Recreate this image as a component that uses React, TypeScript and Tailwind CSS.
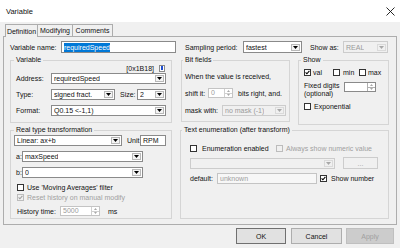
import React from "react";

const FONT = "font-['Liberation_Sans',Arial,sans-serif]";

function Tri({ up, disabled, w = 5, h = 3 }: { up?: boolean; disabled?: boolean; w?: number; h?: number }) {
  return (
    <svg width={w} height={h} viewBox={`0 0 ${w} ${h}`}>
      <path d={up ? `M0 ${h}H${w}L${w / 2} 0Z` : `M0 0H${w}L${w / 2} ${h}Z`} fill={disabled ? "#a8a8a8" : "#000"} />
    </svg>
  );
}

function Combo({ className = "", value = "", disabled = false }: { className?: string; value?: string; disabled?: boolean }) {
  return (
    <div
      className={`h-[11px] flex items-center justify-between border pl-[2px] pr-[1px] shrink-0 ${
        disabled ? "border-[#cccccc] bg-[#f0f0f0] text-[#9a9a9a]" : "border-[#8a8a8a] bg-white text-[#111]"
      } ${className}`}
    >
      <span className="truncate leading-[9px]">{value}</span>
      <div
        className={`w-[9px] h-[7px] flex items-center justify-center border shrink-0 ${
          disabled ? "border-[#dadada] bg-[#f0f0f0]" : "border-[#b8b8b8] bg-[#f4f4f4]"
        }`}
      >
        <Tri disabled={disabled} />
      </div>
    </div>
  );
}

function Spin({ className = "", value = "", disabled = false }: { className?: string; value?: string; disabled?: boolean }) {
  return (
    <div
      className={`h-[10px] flex border shrink-0 ${
        disabled ? "border-[#c4c4c4] bg-white text-[#9a9a9a]" : "border-[#8a8a8a] bg-white text-black"
      } ${className}`}
    >
      <div className="flex-1 pl-[2px] leading-[8px]">{value}</div>
      <div className={`w-[8px] flex flex-col border-l ${disabled ? "border-[#d0d0d0]" : "border-[#b0b0b0]"}`}>
        <div className={`flex-1 flex items-center justify-center border-b ${disabled ? "border-[#d0d0d0]" : "border-[#b0b0b0]"}`}>
          <Tri up disabled w={3} h={2} />
        </div>
        <div className="flex-1 flex items-center justify-center">
          <Tri disabled w={3} h={2} />
        </div>
      </div>
    </div>
  );
}

function Check({ checked = false, disabled = false }: { checked?: boolean; disabled?: boolean }) {
  return (
    <div
      className={`w-[7px] h-[7px] shrink-0 border flex items-center justify-center ${
        disabled ? "border-[#bcbcbc] bg-[#f0f0f0]" : "border-[#333333] bg-white"
      }`}
    >
      {checked && (
        <svg width="5" height="5" viewBox="0 0 5 5">
          <path d="M0.6 2.4L1.9 3.8L4.4 0.9" fill="none" stroke={disabled ? "#a0a0a0" : "#000"} strokeWidth="1.1" />
        </svg>
      )}
    </div>
  );
}

function Group({ title, className = "", legendClass = "ml-[3px]", children }: { title: string; className?: string; legendClass?: string; children: React.ReactNode }) {
  return (
    <fieldset className={`border border-[#d5d5d5] shrink-0 ${className}`}>
      <legend className={`px-[2px] leading-[8px] whitespace-nowrap ${legendClass}`}>{title}</legend>
      {children}
    </fieldset>
  );
}

export default function App() {
  return (
    <div className={`w-[400px] h-[248px] bg-[#f0f0f0] ${FONT} text-[7px] leading-[9px] text-[#111] flex flex-col overflow-hidden`}>
      {/* Title bar */}
      <div className="h-[22px] bg-white flex items-center justify-between pl-[6px] pr-[5px] shrink-0">
        <span className="text-[7.5px]">Variable</span>
        <svg width="9" height="9" viewBox="0 0 9 9">
          <path d="M0.5 0.5L8.5 8.5M8.5 0.5L0.5 8.5" stroke="#111" strokeWidth="0.9" />
        </svg>
      </div>

      {/* Tabs */}
      <div className="h-[14px] flex items-end pl-[5px] shrink-0">
        <div className="relative z-10 h-[13px] w-[33px] mb-[-1px] border border-b-0 border-[#adadad] bg-[#f0f0f0] flex items-center justify-center">
          Definition
        </div>
        <div className="h-[12px] w-[35px] border-t border-r border-[#adadad] flex items-center justify-center">Modifying</div>
        <div className="h-[12px] w-[40px] border-t border-r border-[#adadad] flex items-center justify-center">Comments</div>
      </div>

      {/* Panel */}
      <div className="mx-[3px] h-[189px] border border-[#adadad] shrink-0 flex flex-col">
        {/* Variable name row */}
        <div className="mt-[4px] h-[12px] flex items-center pl-[6px] whitespace-nowrap">
          <span className="w-[51px] shrink-0">Variable name:</span>
          <div className="w-[115px] h-[12px] shrink-0 border border-[#8a8a8a] bg-white flex items-center pl-[2px]">
            <span className="bg-[#0078d7] text-white leading-[9px]">requiredSpeed</span>
          </div>
          <span className="ml-[9px] w-[58px] shrink-0">Sampling period:</span>
          <Combo className="w-[59px] h-[12px]" value="fastest" />
          <span className="ml-[8px] w-[33px] shrink-0">Show as:</span>
          <Combo className="w-[45px] h-[12px]" value="REAL" disabled />
        </div>

        {/* Top groups */}
        <div className="mt-[3px] flex items-start pl-[6px]">
          <Group title="Variable" className="w-[162px] h-[67px]">
            <div className="flex flex-col pl-[5px] pr-[5px]">
              <div className="h-[8px] flex items-center justify-end pr-[1px]">
                <span>[0x1B18]</span>
                <div className="ml-[5px] w-[6px] h-[7px] border border-[#8a8a8a] bg-white flex items-center justify-center">
                  <div className="w-[2px] h-[4px] bg-[#1f4fd0]" />
                </div>
              </div>
              <div className="mt-[1px] h-[11px] flex items-center">
                <span className="w-[35px] shrink-0">Address:</span>
                <Combo className="w-[115px]" value="requiredSpeed" />
              </div>
              <div className="mt-[5px] h-[11px] flex items-center">
                <span className="w-[35px] shrink-0">Type:</span>
                <Combo className="w-[64px]" value="signed fract." />
                <span className="ml-[5px] w-[17px] shrink-0">Size:</span>
                <Combo className="w-[29px]" value="2" />
              </div>
              <div className="mt-[5px] h-[11px] flex items-center">
                <span className="w-[35px] shrink-0">Format:</span>
                <Combo className="w-[115px]" value="Q0.15 <-1,1)" />
              </div>
            </div>
          </Group>

          <Group title="Bit fields" className="ml-[9px] w-[109px] h-[66px]" legendClass="ml-[1px]">
            <div className="flex flex-col pl-[3px]">
              <div className="mt-[8px] h-[9px] whitespace-nowrap">When the value is received,</div>
              <div className="mt-[7px] h-[10px] flex items-center whitespace-nowrap">
                <span className="w-[23px] shrink-0">shift it:</span>
                <Spin className="w-[25px]" value="0" disabled />
                <span className="ml-[5px]">bits right, and.</span>
              </div>
              <div className="mt-[7px] h-[11px] flex items-center">
                <span className="w-[37px] shrink-0 whitespace-nowrap">mask with:</span>
                <Combo className="w-[64px]" value="no mask (-1)" disabled />
              </div>
            </div>
          </Group>

          <Group title="Show" className="ml-[8px] w-[91px] h-[69px]" legendClass="ml-[2px]">
            <div className="flex flex-col pl-[5px]">
              <div className="mt-[4px] h-[8px] flex items-center">
                <div className="w-[29px] flex items-center">
                  <Check checked />
                  <span className="ml-[2px]">val</span>
                </div>
                <div className="w-[26px] flex items-center">
                  <Check />
                  <span className="ml-[3px]">min</span>
                </div>
                <div className="flex items-center">
                  <Check />
                  <span className="ml-[2px]">max</span>
                </div>
              </div>
              <div className="mt-[6px] flex items-start">
                <div className="w-[40px] leading-[8px] shrink-0">
                  Fixed digits
                  <br />
                  (optional)
                </div>
                <Spin className="w-[32px]" />
              </div>
              <div className="mt-[4px] h-[8px] flex items-center">
                <Check />
                <span className="ml-[3px]">Exponential</span>
              </div>
            </div>
          </Group>
        </div>

        {/* Bottom groups */}
        <div className="mt-[1px] flex items-start pl-[6px]">
          <Group title="Real type transformation" className="w-[162px] h-[93px]">
            <div className="flex flex-col whitespace-nowrap">
              <div className="mt-[1px] h-[11px] flex items-center pl-[3px]">
                <Combo className="w-[108px]" value="Linear: ax+b" />
                <span className="ml-[5px] w-[13px] shrink-0">Unit</span>
                <div className="w-[26px] h-[11px] shrink-0 border border-[#8a8a8a] bg-white pl-[2px] flex items-center">RPM</div>
              </div>
              <div className="mt-[5px] h-[11px] flex items-center">
                <span className="w-[11px] shrink-0 pl-[5px]">a:</span>
                <Combo className="w-[121px]" value="maxSpeed" />
              </div>
              <div className="mt-[5px] h-[11px] flex items-center">
                <span className="w-[11px] shrink-0 pl-[5px]">b:</span>
                <Combo className="w-[121px]" value="0" />
              </div>
              <div className="mt-[5px] h-[8px] flex items-center pl-[6px]">
                <Check />
                <span className="ml-[3px]">Use 'Moving Averages' filter</span>
              </div>
              <div className="mt-[2px] h-[8px] flex items-center pl-[6px] text-[#a0a0a0]">
                <Check checked disabled />
                <span className="ml-[3px]">Reset history on manual modify</span>
              </div>
              <div className="mt-[5px] h-[10px] flex items-center pl-[6px]">
                <span className="w-[43px] shrink-0">History time:</span>
                <Spin className="w-[40px]" value="5000" disabled />
                <span className="ml-[8px]">ms</span>
              </div>
            </div>
          </Group>

          <Group title="Text enumeration (after transform)" className="ml-[8px] w-[209px] h-[93px]" legendClass="ml-[1px]">
            <div className="flex flex-col pl-[9px] whitespace-nowrap">
              <div className="mt-[10px] h-[8px] flex items-center">
                <div className="w-[86px] shrink-0 flex items-center">
                  <Check />
                  <span className="ml-[5px]">Enumeration enabled</span>
                </div>
                <Check disabled />
                <span className="ml-[3px] text-[#a0a0a0]">Always show numeric value</span>
              </div>
              <div className="mt-[5px] h-[12px] flex items-center">
                <Combo className="w-[145px]" disabled />
                <div className="ml-[8px] w-[35px] h-[12px] shrink-0 border border-[#cccccc] bg-[#f0f0f0] text-[#a0a0a0] flex items-center justify-center">
                  ...
                </div>
              </div>
              <div className="mt-[4px] h-[11px] flex items-center">
                <span className="w-[27px] shrink-0">default:</span>
                <div className="w-[100px] h-[11px] shrink-0 border border-[#c4c4c4] bg-[#f7f7f7] text-[#a0a0a0] pl-[2px] flex items-center">unknown</div>
                <div className="ml-[3px]">
                  <Check checked />
                </div>
                <span className="ml-[4px]">Show number</span>
              </div>
            </div>
          </Group>
        </div>
      </div>

      {/* Buttons */}
      <div className="mt-[3px] h-[16px] flex justify-end pr-[6px] shrink-0">
        <div className="w-[50px] h-[16px] border border-[#707070] bg-[#e1e1e1] flex items-center justify-center">OK</div>
        <div className="ml-[5px] w-[51px] h-[16px] border border-[#adadad] bg-[#e1e1e1] flex items-center justify-center">Cancel</div>
        <div className="ml-[4px] w-[48px] h-[16px] border border-[#bfbfbf] bg-[#cccccc] text-[#a0a0a0] flex items-center justify-center">
          Apply
        </div>
      </div>
    </div>
  );
}
